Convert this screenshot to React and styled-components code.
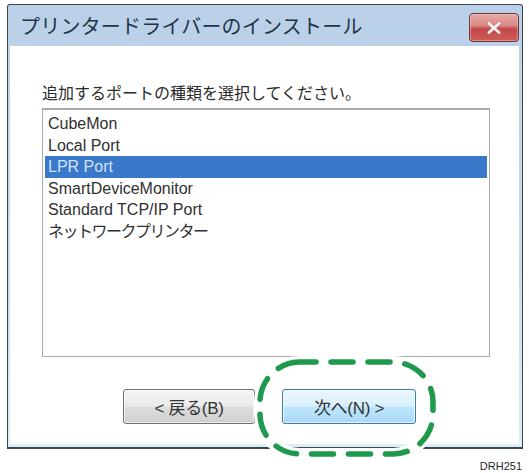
import React from 'react';
import styled, { createGlobalStyle } from 'styled-components';

const GlobalStyle = createGlobalStyle`
  html, body {
    margin: 0;
    padding: 0;
    background: #ffffff;
  }
  body {
    font-family: "Liberation Sans", "Noto Sans CJK JP", sans-serif;
  }
`;

const ports = [
  { name: 'CubeMon' },
  { name: 'Local Port' },
  { name: 'LPR Port', selected: true },
  { name: 'SmartDeviceMonitor' },
  { name: 'Standard TCP/IP Port' },
  { name: 'ネットワークプリンター', narrow: true }
];

const Page = styled.div`
  position: relative;
  width: 529px;
  height: 473px;
  box-sizing: border-box;
  padding: 4px 6px 0 7px;
  display: flex;
  flex-direction: column;
`;

const Window = styled.div`
  width: 516px;
  height: 445px;
  box-sizing: border-box;
  border: 1px solid #3c4650;
  border-bottom-width: 2px;
  border-radius: 3px 3px 0 0;
  background: linear-gradient(180deg, #bad0e8 0%, #c8dbee 60%, #dbeff6 100%);
  display: flex;
  flex-direction: column;
`;

const TitleBar = styled.div`
  height: 41px;
  flex: none;
  display: flex;
  justify-content: space-between;
  align-items: flex-start;
  padding: 0 3px 0 12px;
  box-sizing: border-box;
`;

const Title = styled.span`
  font-family: "Noto Sans CJK JP", sans-serif;
  font-size: 20px;
  line-height: 41px;
  color: #243447;
  letter-spacing: 0.2px;
`;

const CloseButton = styled.div`
  margin-top: 8px;
  width: 50px;
  height: 29px;
  box-sizing: border-box;
  border: 1px solid #6a3340;
  border-radius: 4px;
  background: linear-gradient(180deg, #e6aaa6 0%, #d98a86 42%, #c4484a 56%, #cf5d55 100%);
  box-shadow: inset 0 0 0 1px rgba(255, 210, 205, 0.45);
  display: flex;
  align-items: center;
  justify-content: center;
`;

const Content = styled.div`
  flex: 1;
  margin: 0 3px 3px 2px;
  background: #ffffff;
  padding: 35px 0 0 32px;
  display: flex;
  flex-direction: column;
`;

const Prompt = styled.div`
  font-family: "Noto Sans CJK JP", sans-serif;
  font-size: 16px;
  line-height: 22px;
  color: #2b2b2b;
`;

const ListBox = styled.div`
  margin-top: 5px;
  width: 448px;
  height: 249px;
  box-sizing: border-box;
  border: 1px solid #a9a9a9;
  border-top: 2px solid #a9a9a9;
  padding: 3px 2px 0 2px;
  background: #ffffff;
`;

const Item = styled.div`
  height: 21.6px;
  line-height: 21.6px;
  padding-left: 3px;
  font-size: 16px;
  letter-spacing: ${p => (p.$narrow ? '-1.5px' : '0')};
  color: ${p => (p.$selected ? '#cfe2ff' : '#303030')};
  background: ${p => (p.$selected ? '#3a78c9' : 'transparent')};
  white-space: nowrap;
`;

const ButtonRow = styled.div`
  margin-top: 32px;
  margin-left: 81px;
  display: flex;
  gap: 27px;
`;

const Button = styled.div`
  width: ${p => (p.$primary ? '134px' : '132px')};
  height: 35px;
  box-sizing: border-box;
  border: 1px solid ${p => (p.$primary ? '#3d7bad' : '#707070')};
  border-radius: 3px;
  background: ${p =>
    p.$primary
      ? 'linear-gradient(180deg, #eaf6fd 0%, #d9f0fc 48%, #bee6fd 52%, #a7d9f5 100%)'
      : 'linear-gradient(180deg, #f4f4f4 0%, #ebebeb 48%, #dddddd 52%, #cfcfcf 100%)'};
  box-shadow: inset 0 0 0 1px rgba(255, 255, 255, 0.7);
  display: flex;
  align-items: center;
  justify-content: center;
  font-family: "Liberation Sans", "Noto Sans CJK JP", sans-serif;
  font-size: 17px;
  color: #333333;
  letter-spacing: -0.3px;
`;

const Caption = styled.div`
  margin-top: 11px;
  text-align: right;
  padding-right: 1px;
  font-family: "Liberation Sans", sans-serif;
  font-size: 11px;
  line-height: 13px;
  color: #2a2a2a;
`;

const Highlight = styled.svg`
  position: absolute;
  left: 252px;
  top: 356px;
  overflow: visible;
`;

const CloseGlyph = () => (
  <svg width="14" height="12" viewBox="0 0 14 12">
    <path d="M2 1.5 L12 10.5 M12 1.5 L2 10.5" stroke="#7a3030" strokeWidth="3.6" strokeLinecap="round" opacity="0.35" />
    <path d="M2 1.5 L12 10.5 M12 1.5 L2 10.5" stroke="#f4f0f0" strokeWidth="3" strokeLinecap="round" />
  </svg>
);

export default function App() {
  return (
    <>
      <GlobalStyle />
      <Page>
        <Window>
          <TitleBar>
            <Title>プリンタードライバーのインストール</Title>
            <CloseButton>
              <CloseGlyph />
            </CloseButton>
          </TitleBar>
          <Content>
            <Prompt>追加するポートの種類を選択してください。</Prompt>
            <ListBox>
              {ports.map(p => (
                <Item key={p.name} $selected={p.selected} $narrow={p.narrow}>
                  {p.name}
                </Item>
              ))}
            </ListBox>
            <ButtonRow>
              <Button>&lt; 戻る(B)</Button>
              <Button $primary>次へ(N) &gt;</Button>
            </ButtonRow>
          </Content>
        </Window>
        <Caption>DRH251</Caption>
        {/* green dashed callout around the next button */}
        <Highlight width="187" height="104" viewBox="0 0 187 104">
          <rect x="8" y="6" width="173" height="92" rx="40" fill="none" stroke="#ffffff" strokeWidth="12" />
          <rect x="8" y="6" width="173" height="92" rx="40" fill="none" stroke="#1f9a4c" strokeWidth="5.5" strokeDasharray="22 15" strokeDashoffset="6" strokeLinecap="round" />
        </Highlight>
      </Page>
    </>
  );
}
